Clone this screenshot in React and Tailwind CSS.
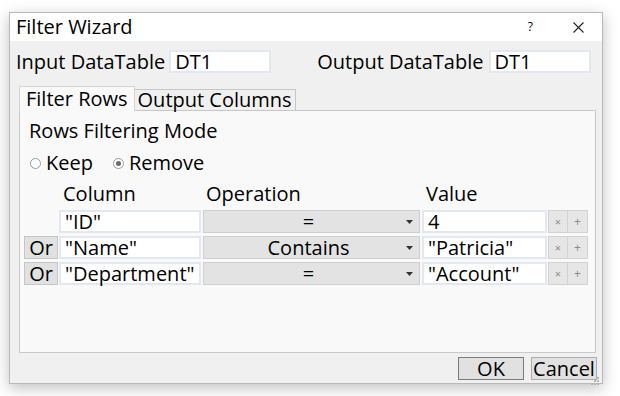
import React from "react"

const font = { fontFamily: '"Open Sans", "Noto Sans", sans-serif' }

const rows = [
  { or: false, column: '"ID"', op: "=", value: "4" },
  { or: true, column: '"Name"', op: "Contains", value: '"Patricia"' },
  { or: true, column: '"Department"', op: "=", value: '"Account"' },
]

function TextBox({ value, className }) {
  return (
    <div className={"h-[23px] bg-white border-2 border-[#e3e8f0] flex items-center px-[4px] leading-[19px] whitespace-nowrap " + className}>
      {value}
    </div>
  )
}

function Radio({ checked, label }) {
  return (
    <div className="flex items-center gap-[5px]">
      <span className="w-[11px] h-[11px] rounded-full border border-[#9a9a9a] bg-white flex items-center justify-center">
        {checked && <span className="w-[5px] h-[5px] rounded-full bg-[#6d6d6d]" />}
      </span>
      <span>{label}</span>
    </div>
  )
}

function FilterRow({ row }) {
  return (
    <div className="flex items-center h-[23px]">
      {row.or ? (
        <button className="w-[34px] h-[23px] bg-[#e1e1e1] border border-[#c6c6c6] flex items-center justify-center leading-[19px]">
          Or
        </button>
      ) : (
        <div className="w-[34px]" />
      )}
      <TextBox value={row.column} className="ml-[1px] w-[142px]" />
      <div className="ml-[2px] w-[217px] h-[23px] bg-[#e3e3e3] border border-[#cfcfcf] relative flex items-center justify-center leading-[19px]">
        <span className="-ml-[6px]">{row.op}</span>
        <svg className="absolute right-[6px] top-[9px]" width="7" height="4" viewBox="0 0 7 4">
          <path d="M0 0h7L3.5 4z" fill="#333" />
        </svg>
      </div>
      <TextBox value={row.value} className="ml-[2px] w-[125px]" />
      <div className="flex ml-[1px]">
        <div className="w-[20px] h-[23px] bg-[#e6e6e6] border border-[#d2d2d2] flex items-center justify-center text-[11px] text-[#8a8a8a] leading-none">×</div>
        <div className="w-[20px] h-[23px] bg-[#e6e6e6] border border-[#d2d2d2] border-l-0 flex items-center justify-center text-[12px] text-[#8a8a8a] leading-none">+</div>
      </div>
    </div>
  )
}

export default function App() {
  return (
    <div className="w-[620px] h-[396px] bg-white pt-[12px] pl-[9px] text-[20px] text-black" style={font}>
      <div className="w-[594px] h-[372px] border border-[#b9b9b9] shadow-[0_4px_14px_rgba(0,0,0,0.25)] flex flex-col bg-[#f0f0f0]">
        {/* title bar */}
        <div className="h-[28px] bg-white flex items-center pl-[6px] pr-[18px] shrink-0">
          <span className="text-[20px] leading-none">Filter Wizard</span>
          <span className="ml-auto text-[12px] mr-[40px]">?</span>
          <svg width="11" height="11" viewBox="0 0 11 11">
            <path d="M0.5 0.5l10 10M10.5 0.5l-10 10" stroke="#222" strokeWidth="1.1" />
          </svg>
        </div>

        {/* data tables */}
        <div className="flex items-center h-[23px] mt-[9px] pl-[6px]">
          <span>Input DataTable</span>
          <TextBox value="DT1" className="ml-[4px] w-[102px]" />
          <span className="ml-[46px]">Output DataTable</span>
          <TextBox value="DT1" className="ml-[5px] w-[102px]" />
        </div>

        {/* tabs */}
        <div className="flex items-end mt-[13px] pl-[9px] h-[25px] relative z-10">
          <div className="h-[25px] px-[6px] bg-[#f9f9f9] border border-[#d4d4d4] border-b-0 flex items-center leading-none">Filter Rows</div>
          <div className="h-[22px] px-[3px] bg-[#f0f0f0] border border-[#c6c6c6] border-l-0 flex items-center leading-none">Output Columns</div>
        </div>

        {/* tab panel */}
        <div className="ml-[9px] mr-[6px] -mt-[1px] h-[243px] bg-[#f9f9f9] border border-[#c9c9c9] pl-[9px] pt-[8px]">
          <div className="leading-[24px]">Rows Filtering Mode</div>
          <div className="flex items-center gap-[20px] mt-[8px] pl-[1px] h-[24px]">
            <Radio label="Keep" />
            <Radio checked label="Remove" />
          </div>
          <div className="flex items-center h-[22px] mt-[8px]">
            <span className="ml-[34px] w-[143px]">Column</span>
            <span className="w-[220px]">Operation</span>
            <span>Value</span>
          </div>
          <div className="flex flex-col gap-[3px] mt-[5px] -ml-[5px]">
            {rows.map((r, i) => (
              <FilterRow key={i} row={r} />
            ))}
          </div>
        </div>

        {/* footer */}
        <div className="flex justify-end items-center gap-[7px] mt-[4px] pr-[5px] relative">
          <button className="w-[66px] h-[23px] bg-[#e1e1e1] border border-[#7a7a7a] leading-[19px]">OK</button>
          <button className="w-[66px] h-[23px] bg-[#e1e1e1] border border-[#adadad] leading-[19px] whitespace-nowrap">Cancel</button>
          <svg className="absolute right-[2px] bottom-[-6px]" width="10" height="10" viewBox="0 0 10 10">
            <g fill="#b5b5b5">
              <rect x="7" y="1" width="2" height="2" />
              <rect x="4" y="4" width="2" height="2" />
              <rect x="7" y="4" width="2" height="2" />
              <rect x="1" y="7" width="2" height="2" />
              <rect x="4" y="7" width="2" height="2" />
              <rect x="7" y="7" width="2" height="2" />
            </g>
          </svg>
        </div>
      </div>
    </div>
  )
}
